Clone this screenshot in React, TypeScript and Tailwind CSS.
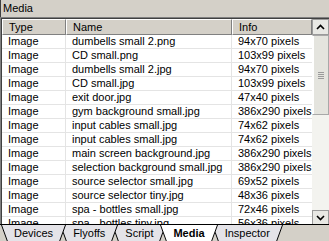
import React from "react";

const rows: [string, string, string][] = [
  ["Image", "dumbells small 2.png", "94x70 pixels"],
  ["Image", "CD small.png", "103x99 pixels"],
  ["Image", "dumbells small 2.jpg", "94x70 pixels"],
  ["Image", "CD small.jpg", "103x99 pixels"],
  ["Image", "exit door.jpg", "47x40 pixels"],
  ["Image", "gym background small.jpg", "386x290 pixels"],
  ["Image", "input cables small.jpg", "74x62 pixels"],
  ["Image", "input cables small.jpg", "74x62 pixels"],
  ["Image", "main screen background.jpg", "386x290 pixels"],
  ["Image", "selection background small.jpg", "386x290 pixels"],
  ["Image", "source selector small.jpg", "69x52 pixels"],
  ["Image", "source selector tiny.jpg", "48x36 pixels"],
  ["Image", "spa - bottles small.jpg", "72x46 pixels"],
  ["Image", "spa - bottles tiny.jpg", "56x36 pixels"],
];

function Chevron({ down }: { down?: boolean }) {
  return (
    <svg width="9" height="6" viewBox="0 0 9 6">
      <path
        d={down ? "M1 1 L4.5 4.5 L8 1" : "M1 5 L4.5 1.5 L8 5"}
        stroke="#000"
        strokeWidth="1.6"
        fill="none"
      />
    </svg>
  );
}

function Tab({ label, active, z, first }: { label: string; active?: boolean; z: number; first?: boolean }) {
  const fill = active ? "#ffffff" : "#e4e3e8";
  return (
    <div
      className={`relative h-[17px] flex items-center px-[13px] ${first ? "" : "-ml-[6px]"} ${
        active ? "font-bold" : ""
      }`}
      style={{ zIndex: z }}
    >
      <div className={`absolute top-0 bottom-[1px] left-[6px] right-[6px] ${active ? "bg-white" : "bg-[#e4e3e8]"}`} />
      <svg className="absolute left-0 top-0" width="7" height="17" viewBox="0 0 7 17">
        <polygon points="0,0 7,0 7,16 6,16" fill={fill} />
        <line x1="0.5" y1="0" x2="6.5" y2="16.5" stroke="#000" strokeWidth="1" />
      </svg>
      <svg className="absolute right-0 top-0" width="7" height="17" viewBox="0 0 7 17">
        <polygon points="0,0 7,0 1,16 0,16" fill={fill} />
        <line x1="6.5" y1="0" x2="0.5" y2="16.5" stroke="#000" strokeWidth="1" />
      </svg>
      <span className="relative">{label}</span>
    </div>
  );
}

export default function App() {
  return (
    <div className="w-[329px] h-[241px] overflow-hidden bg-[#d4d0c8] flex flex-col font-['Liberation_Sans',Arial,sans-serif] text-[11px] leading-none text-black">
      <div className="h-[17px] shrink-0 border-l border-[#404040] pl-[2px] flex items-center">Media</div>
      <div className="h-[208px] shrink-0 flex border-t border-l border-[#808080]">
        <div className="flex-1 flex border-t border-l border-[#404040] min-w-0">
          <div className="flex-1 bg-white overflow-hidden flex flex-col min-w-0">
            <div className="h-[16px] shrink-0 flex bg-[#d4d0c8]">
              <div className="w-[64px] flex items-center pl-[6px] border-t border-l border-white border-r border-b border-r-[#808080] border-b-[#808080]">Type</div>
              <div className="w-[166px] flex items-center pl-[6px] border-t border-l border-white border-r border-b border-r-[#808080] border-b-[#808080]">Name</div>
              <div className="flex-1 flex items-center pl-[6px] border-t border-l border-white border-r border-b border-r-[#808080] border-b-[#808080]">Info</div>
            </div>
            {rows.map((r, i) => (
              <div key={i} className="h-[14px] shrink-0 flex border-b border-[#e4e4e4]">
                <div className="w-[64px] pl-[6px] flex items-center border-r border-[#e4e4e4] whitespace-nowrap overflow-hidden">{r[0]}</div>
                <div className="w-[166px] pl-[6px] flex items-center border-r border-[#e4e4e4] whitespace-nowrap overflow-hidden">{r[1]}</div>
                <div className="flex-1 pl-[6px] flex items-center whitespace-nowrap overflow-hidden">{r[2]}</div>
              </div>
            ))}
          </div>
          <div className="w-[17px] shrink-0 flex flex-col bg-[#f3f3ef]">
            <div className="h-[16px] shrink-0 flex items-center justify-center bg-[#e8e8e4] border border-[#9a9a9a]">
              <Chevron />
            </div>
            <div className="h-[80px] shrink-0 flex flex-col items-center justify-center gap-[1px] bg-[#e4e4de] border border-[#a8a8a8] border-l-white shadow-[inset_1px_0_0_#fff]">
              <div className="w-[6px] h-px bg-[#9a9a9a]" />
              <div className="w-[6px] h-px bg-[#9a9a9a]" />
              <div className="w-[6px] h-px bg-[#9a9a9a]" />
              <div className="w-[6px] h-px bg-[#9a9a9a]" />
            </div>
            <div className="flex-1" />
            <div className="h-[15px] shrink-0 flex items-center justify-center bg-[#e8e8e4] border border-[#9a9a9a]">
              <Chevron down />
            </div>
          </div>
        </div>
      </div>
      <div className="flex-1 flex border-t border-black pl-[1px] -mt-px">
        <Tab label="Devices" z={5} first />
        <Tab label="Flyoffs" z={4} />
        <Tab label="Script" z={3} />
        <Tab label="Media" z={10} active />
        <Tab label="Inspector" z={1} />
      </div>
    </div>
  );
}
